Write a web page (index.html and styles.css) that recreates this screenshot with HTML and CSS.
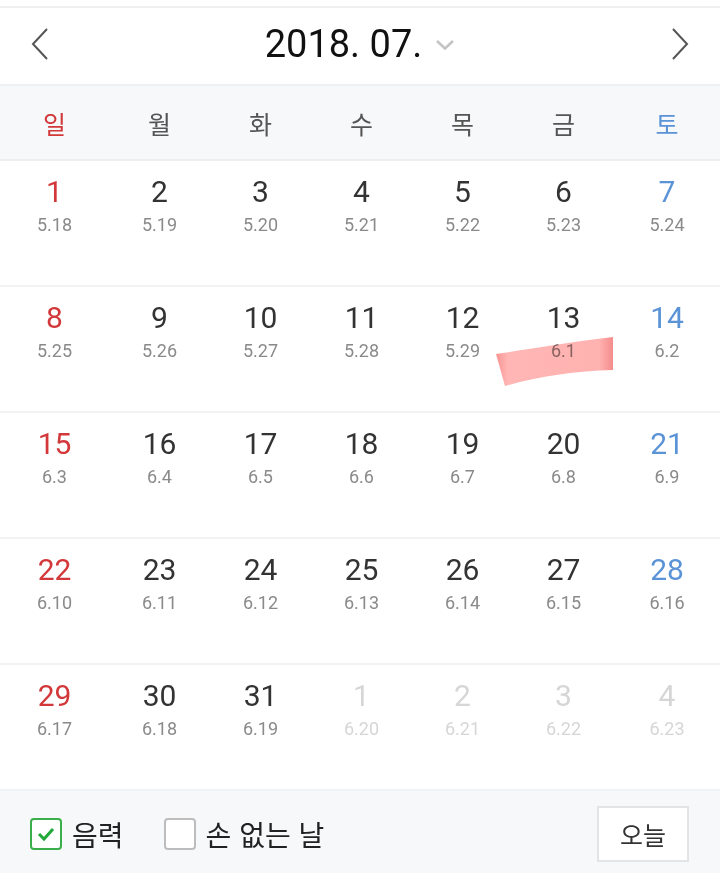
FILE: index.html
```html
<!DOCTYPE html>
<html lang="ko">
<head>
<meta charset="utf-8">
<link rel="stylesheet" href="styles.css">
</head>
<body>
<div class="app">
  <div class="topline"></div>
  <header class="head">
    <span class="nav">
      <svg width="20" height="34" viewBox="0 0 20 34"><path d="M17 2 L3 17 L17 32" fill="none" stroke="#555" stroke-width="2"/></svg>
    </span>
    <div class="title">2018. 07.
      <svg class="caret" width="20" height="12" viewBox="0 0 20 12"><path d="M2 2 L10 9.5 L18 2" fill="none" stroke="#c4c4c4" stroke-width="2.6"/></svg>
    </div>
    <span class="nav">
      <svg width="20" height="34" viewBox="0 0 20 34"><path d="M3 2 L17 17 L3 32" fill="none" stroke="#555" stroke-width="2"/></svg>
    </span>
  </header>
  <div class="weekdays">
    <span class="sun">일</span><span>월</span><span>화</span><span>수</span><span>목</span><span>금</span><span class="sat">토</span>
  </div>
  <div class="weeks">
    <div class="week">
      <div class="day sun"><b>1</b><i>5.18</i></div>
      <div class="day"><b>2</b><i>5.19</i></div>
      <div class="day"><b>3</b><i>5.20</i></div>
      <div class="day"><b>4</b><i>5.21</i></div>
      <div class="day"><b>5</b><i>5.22</i></div>
      <div class="day"><b>6</b><i>5.23</i></div>
      <div class="day sat"><b>7</b><i>5.24</i></div>
    </div>
    <div class="week">
      <div class="day sun"><b>8</b><i>5.25</i></div>
      <div class="day"><b>9</b><i>5.26</i></div>
      <div class="day"><b>10</b><i>5.27</i></div>
      <div class="day"><b>11</b><i>5.28</i></div>
      <div class="day"><b>12</b><i>5.29</i></div>
      <div class="day"><b>13</b><i>6.1</i></div>
      <div class="day sat"><b>14</b><i>6.2</i></div>
    </div>
    <div class="week">
      <div class="day sun"><b>15</b><i>6.3</i></div>
      <div class="day"><b>16</b><i>6.4</i></div>
      <div class="day"><b>17</b><i>6.5</i></div>
      <div class="day"><b>18</b><i>6.6</i></div>
      <div class="day"><b>19</b><i>6.7</i></div>
      <div class="day"><b>20</b><i>6.8</i></div>
      <div class="day sat"><b>21</b><i>6.9</i></div>
    </div>
    <div class="week">
      <div class="day sun"><b>22</b><i>6.10</i></div>
      <div class="day"><b>23</b><i>6.11</i></div>
      <div class="day"><b>24</b><i>6.12</i></div>
      <div class="day"><b>25</b><i>6.13</i></div>
      <div class="day"><b>26</b><i>6.14</i></div>
      <div class="day"><b>27</b><i>6.15</i></div>
      <div class="day sat"><b>28</b><i>6.16</i></div>
    </div>
    <div class="week">
      <div class="day sun"><b>29</b><i>6.17</i></div>
      <div class="day"><b>30</b><i>6.18</i></div>
      <div class="day"><b>31</b><i>6.19</i></div>
      <div class="day other"><b>1</b><i>6.20</i></div>
      <div class="day other"><b>2</b><i>6.21</i></div>
      <div class="day other"><b>3</b><i>6.22</i></div>
      <div class="day other"><b>4</b><i>6.23</i></div>
    </div>
    <svg class="marker" width="130" height="56" viewBox="0 0 130 56">
      <defs>
        <linearGradient id="hl" x1="0" y1="0" x2="1" y2="0">
          <stop offset="0" stop-color="#f89393"/>
          <stop offset="0.1" stop-color="#ffb6b4"/>
          <stop offset="0.88" stop-color="#ffb3b1"/>
          <stop offset="1" stop-color="#f48c8c"/>
        </linearGradient>
      </defs>
      <path d="M6 19 C40 14 80 7 123 2 L123 35 C85 36 50 41 15 51 C12 40 9 30 6 19 Z" fill="url(#hl)"/>
    </svg>
  </div>
  <footer class="foot">
    <label class="check">
      <span class="box on"><svg width="22" height="22" viewBox="0 0 22 22"><path d="M4 11 L9 16 L18 6" fill="none" stroke="#23a83a" stroke-width="3"/></svg></span>
      <span>음력</span>
    </label>
    <label class="check">
      <span class="box"></span>
      <span>손 없는 날</span>
    </label>
    <button class="today">오늘</button>
  </footer>
</div>
</body>
</html>
```
FILE: styles.css
```css
* { box-sizing: border-box; }
html, body { margin: 0; padding: 0; background: #fff; }
.app {
  width: 720px;
  height: 873px;
  display: flex;
  flex-direction: column;
  font-family: Roboto, "Noto Sans CJK KR", sans-serif;
  overflow: hidden;
}
.topline { height: 8px; border-bottom: 2px solid #efefef; }
.head {
  height: 78px;
  display: flex;
  align-items: center;
  justify-content: space-between;
  padding: 0 30px 4px 30px;
  border-bottom: 2px solid #eef0f2;
}
.nav { display: flex; width: 20px; }
.title {
  font-size: 38px;
  color: #111;
  display: flex;
  align-items: center;
}
.caret { margin-left: 13px; margin-top: 2px; }
.weekdays {
  height: 75px;
  background: #f7f8fa;
  border-bottom: 2px solid #eceef0;
  display: grid;
  grid-template-columns: 109px repeat(5, 101px) 1fr;
  align-items: center;
  font-family: "Noto Sans CJK KR", sans-serif;
  font-size: 25px;
  color: #555;
  text-align: center;
}
.weekdays span { margin-top: 1px; }
.sun { color: #d2383a !important; }
.sat { color: #5b93d7 !important; }
.weeks { position: relative; }
.week {
  height: 126px;
  display: grid;
  grid-template-columns: 109px repeat(5, 101px) 1fr;
  border-bottom: 2px solid #f1f2f3;
}
.day {
  display: flex;
  flex-direction: column;
  align-items: center;
  padding-top: 13px;
  color: #333;
}
.day b {
  font-weight: 400;
  font-size: 30px;
  line-height: 36px;
}
.day i {
  font-style: normal;
  font-size: 18px;
  line-height: 24px;
  margin-top: 3px;
  color: #8a8a8a;
}
.day.other b, .day.other i { color: #d6d6d6; }
.marker {
  position: absolute;
  left: 490px;
  top: 174px;
  mix-blend-mode: multiply;
}
.foot {
  flex: 1;
  background: #f7f8fa;
  display: flex;
  align-items: center;
  padding: 4px 30px 0 30px;
  font-family: "Noto Sans CJK KR", sans-serif;
}
.check {
  display: flex;
  align-items: center;
  font-size: 28px;
  color: #222;
  margin-right: 40px;
}
.box {
  width: 32px;
  height: 32px;
  border: 2px solid #bdbdbd;
  border-radius: 4px;
  background: #fff;
  margin-right: 10px;
  display: flex;
  align-items: center;
  justify-content: center;
}
.box.on { border-color: #3aae4a; }
.today {
  margin-left: auto;
  width: 92px;
  height: 56px;
  background: #fff;
  border: 2px solid #e3e4e6;
  font-family: "Noto Sans CJK KR", sans-serif;
  font-size: 25px;
  color: #333;
  margin-right: 1px;
}
```
